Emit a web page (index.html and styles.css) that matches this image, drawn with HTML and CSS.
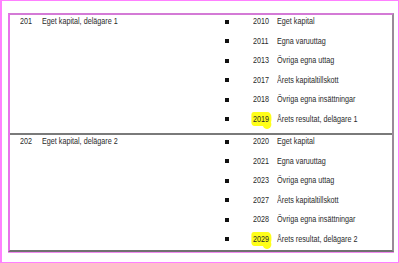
FILE: index.html
```html
<!DOCTYPE html>
<html>
<head>
<meta charset="utf-8">
<link rel="stylesheet" href="styles.css">
</head>
<body>
<div class="frame">
  <div class="table">
    <div class="section">
      <div class="code">201</div>
      <div class="name">Eget kapital, delägare 1</div>
      <div class="bullet r1"><i></i></div><div class="num r1">2010</div><div class="desc r1">Eget kapital</div>
      <div class="bullet r2"><i></i></div><div class="num r2">2011</div><div class="desc r2">Egna varuuttag</div>
      <div class="bullet r3"><i></i></div><div class="num r3">2013</div><div class="desc r3">Övriga egna uttag</div>
      <div class="bullet r4"><i></i></div><div class="num r4">2017</div><div class="desc r4">Årets kapitaltillskott</div>
      <div class="bullet r5"><i></i></div><div class="num r5">2018</div><div class="desc r5">Övriga egna insättningar</div>
      <div class="bullet r6"><i></i></div><div class="num r6"><span class="hl">2019</span></div><div class="desc r6">Årets resultat, delägare 1</div>
    </div>
    <div class="section second">
      <div class="code">202</div>
      <div class="name">Eget kapital, delägare 2</div>
      <div class="bullet r1"><i></i></div><div class="num r1">2020</div><div class="desc r1">Eget kapital</div>
      <div class="bullet r2"><i></i></div><div class="num r2">2021</div><div class="desc r2">Egna varuuttag</div>
      <div class="bullet r3"><i></i></div><div class="num r3">2023</div><div class="desc r3">Övriga egna uttag</div>
      <div class="bullet r4"><i></i></div><div class="num r4">2027</div><div class="desc r4">Årets kapitaltillskott</div>
      <div class="bullet r5"><i></i></div><div class="num r5">2028</div><div class="desc r5">Övriga egna insättningar</div>
      <div class="bullet r6"><i></i></div><div class="num r6"><span class="hl">2029</span></div><div class="desc r6">Årets resultat, delägare 2</div>
    </div>
  </div>
</div>
</body>
</html>
```

FILE: styles.css
```css
html, body {
  margin: 0;
  padding: 0;
  background: #ffffff;
}
.frame {
  box-sizing: border-box;
  width: 399px;
  height: 263px;
  border: 1px solid #ff80ff;
  border-left-width: 2px;
  padding: 12px 3px 0 6px;
  font-family: "Liberation Sans", Arial, sans-serif;
  font-size: 9px;
  color: #2a2a2a;
}
.table {
  box-sizing: border-box;
  width: 386px;
  height: 239px;
  border-top: 2px solid #d47ad6;
  border-left: 2px solid #e873ea;
  border-right: 2px solid #9a8a9a;
  border-bottom: 2px solid #707070;
  box-shadow: 0 1px 0 #f08cf0;
}
.section {
  display: grid;
  grid-template-columns: 22px 183px 28px 24px 1fr;
  grid-template-rows: repeat(6, 19.5px);
  padding-left: 10px;
  padding-top: 1px;
  line-height: 11px;
}
.section.second {
  border-top: 2px solid #7a7a7a;
}
.code, .name, .num, .desc {
  white-space: nowrap;
  transform: scaleX(0.8);
  transform-origin: 0 50%;
}
.code { grid-column: 1; grid-row: 1; }
.name { grid-column: 2; grid-row: 1; }
.bullet { grid-column: 3; display: flex; align-items: center; height: 11px; }
.bullet i {
  display: block;
  width: 4px;
  height: 4px;
  background: #111;
}
.num { grid-column: 4; position: relative; }
.desc { grid-column: 5; }
.r1 { grid-row: 1; }
.r2 { grid-row: 2; }
.r3 { grid-row: 3; }
.r4 { grid-row: 4; }
.r5 { grid-row: 5; }
.r6 { grid-row: 6; }
.hl {
  position: relative;
  z-index: 1;
}
.hl::before {
  content: "";
  position: absolute;
  left: -2px;
  top: -2px;
  width: 25px;
  height: 14px;
  background: #ffff1a;
  border-radius: 3px 5px 6px 4px;
  z-index: -1;
}
.hl::after {
  content: "";
  position: absolute;
  left: 12px;
  top: 8px;
  width: 11px;
  height: 7px;
  background: #ffff1a;
  border-radius: 2px 2px 5px 5px;
  z-index: -1;
}
```
